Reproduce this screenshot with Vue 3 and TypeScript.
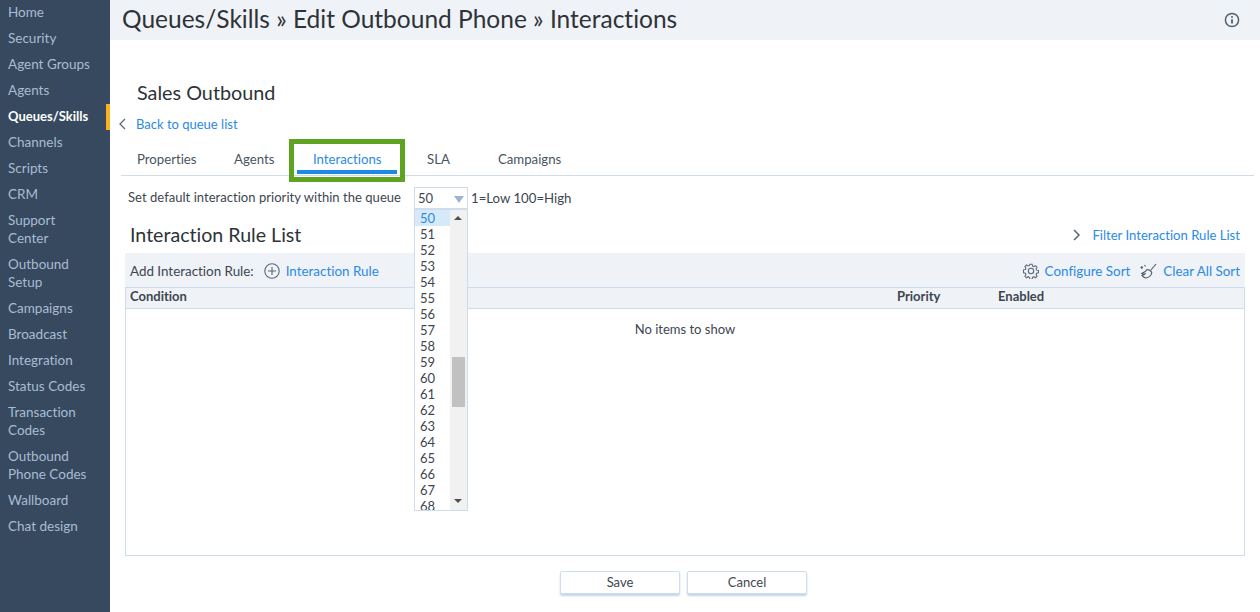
<script setup lang="ts">
interface NavItem { label: string; active?: boolean }
const nav: NavItem[] = [
  { label: 'Home' }, { label: 'Security' }, { label: 'Agent Groups' }, { label: 'Agents' },
  { label: 'Queues/Skills', active: true }, { label: 'Channels' }, { label: 'Scripts' }, { label: 'CRM' },
  { label: 'Support Center' }, { label: 'Outbound Setup' }, { label: 'Campaigns' }, { label: 'Broadcast' },
  { label: 'Integration' }, { label: 'Status Codes' }, { label: 'Transaction Codes' },
  { label: 'Outbound Phone Codes' }, { label: 'Wallboard' }, { label: 'Chat design' }
]
const tabs = ['Properties', 'Agents', 'Interactions', 'SLA', 'Campaigns']
const options: number[] = Array.from({ length: 19 }, (_, i) => 50 + i)
</script>

<template>
  <div class="app">
    <aside class="side">
      <a v-for="n in nav" :key="n.label" class="nav" :class="{ on: n.active }">{{ n.label }}</a>
    </aside>
    <main class="main">
      <header class="top">
        <h1>Queues/Skills » Edit Outbound Phone » Interactions</h1>
        <svg class="info" width="16" height="16" viewBox="0 0 16 16" fill="none" stroke="#4f6070" stroke-width="1.5">
          <circle cx="8" cy="8" r="6.6" />
          <path d="M8 7.2v4.2" stroke-width="1.8" />
          <circle cx="8" cy="4.9" r="1" fill="#4f6070" stroke="none" />
        </svg>
      </header>
      <section class="body">
        <h2 class="name">Sales Outbound</h2>
        <div class="back">
          <svg width="8" height="12" viewBox="0 0 8 12" fill="none" stroke="#5a6875" stroke-width="1.3"><path d="M7 1 2 6l5 5" /></svg>
          <a class="link">Back to queue list</a>
        </div>
        <nav class="tabs">
          <a v-for="t in tabs" :key="t" class="tab" :class="['t-' + t.toLowerCase()]">{{ t }}</a>
          <span class="callout"></span>
        </nav>
        <div class="prio">
          <span class="prio-label">Set default interaction priority within the queue</span>
          <div class="select">
            <span>50</span>
            <i class="caret"></i>
            <div class="drop">
              <ul>
                <li v-for="o in options" :key="o" :class="{ sel: o === 50 }">{{ o }}</li>
              </ul>
              <div class="bar">
                <i class="up"></i>
                <b class="thumb"></b>
                <i class="down"></i>
              </div>
            </div>
          </div>
          <span class="hint">1=Low 100=High</span>
        </div>
        <div class="list-head">
          <h2>Interaction Rule List</h2>
          <div class="filter">
            <svg width="8" height="12" viewBox="0 0 8 12" fill="none" stroke="#5a6875" stroke-width="1.5"><path d="m1 1 5 5-5 5" /></svg>
            <a class="link">Filter Interaction Rule List</a>
          </div>
        </div>
        <div class="grid">
          <div class="tools">
            <span class="add">Add Interaction Rule:</span>
            <svg class="plus" width="16" height="16" viewBox="0 0 16 16" fill="none" stroke="#5a6875" stroke-width="1.1">
              <circle cx="8" cy="8" r="7.2" /><path d="M8 4v8M4 8h8" />
            </svg>
            <a class="link">Interaction Rule</a>
            <span class="grow"></span>
            <svg class="ic" width="16" height="16" viewBox="0 0 16 16" fill="none" stroke="#5a6875" stroke-width="1.1">
              <path d="M6.800.8h2.400l.4 2 1.400.6 1.700-1.100 1.700 1.700-1.100 1.700.6 1.400 2 .4v2.400l-2 .4-.6 1.400 1.100 1.700-1.700 1.700-1.700-1.100-1.400.6-.4 2H6.800l-.4-2-1.400-.6-1.700 1.100-1.700-1.700 1.100-1.700-.6-1.400-2-.4V6.800l2-.4.6-1.400-1.100-1.700 1.700-1.700 1.700 1.100 1.400-.6z" transform="translate(.4 .4) scale(.95)" />
              <circle cx="8" cy="8" r="2.700" />
            </svg>
            <a class="link cfg">Configure Sort</a>
            <svg class="ic" width="17" height="16" viewBox="0 0 17 16" fill="none" stroke="#4f5d6b" stroke-width="1.100">
              <path d="M16 1 10.500 7.500" />
              <path d="M7 6.500c1.800 0 3.800 1.300 4.800 3-.4 2.800-2.600 5-6.300 5.500-1.200-.4-2.600-1.300-3.500-2.600 1.500-.2 2.600-.7 3.100-1.600-.8.200-2 .2-3.100-.4C4.400 9.700 6.200 8.200 7 6.500z" />
              <path d="M.5 4.500h2.500M1.800 3v3M4.500 2l1 1.300" />
            </svg>
            <a class="link">Clear All Sort</a>
          </div>
          <div class="cols">
            <span class="c-cond">Condition</span>
            <span class="c-prio">Priority</span>
            <span class="c-en">Enabled</span>
          </div>
          <div class="rows">No items to show</div>
        </div>
        <div class="actions">
          <button type="button">Save</button>
          <button type="button">Cancel</button>
        </div>
      </section>
    </main>
  </div>
</template>

<style>
html, body { margin: 0; padding: 0; background: #fff; overflow: hidden; }
</style>

<style scoped>
.app { display: flex; width: 1260px; height: 612px; overflow: hidden; font-family: Lato, "Noto Sans", sans-serif; font-size: 13px; color: #3d4650; font-variant-ligatures: none; }
.side { flex: 0 0 110px; background: #36495e; display: flex; flex-direction: column; }
.nav { display: block; padding: 3px 14px 5px 8px; line-height: 18px; color: #a8bcd4; font-size: 13.5px; position: relative; }
.nav.on { color: #fff; font-weight: 700; font-size: 13px; }
.nav.on::after { content: ""; position: absolute; right: 0; top: 0; bottom: 0; width: 4px; background: #fbb01f; }
.main { flex: 1; min-width: 0; display: flex; flex-direction: column; }
.top { height: 40px; background: #eff2f7; display: flex; align-items: center; padding: 0 20px 0 12px; justify-content: space-between; }
.top h1 { margin: 0 0 2px; font-size: 24.5px; font-weight: 400; color: #2e3338; line-height: 38px; }
.body { flex: 1; display: flex; flex-direction: column; padding: 0 6px 0 11px; }
.name { margin: 41px 0 0 16px; font-size: 19.800px; font-weight: 400; line-height: 22px; color: #2e3338; }
.link { color: #2b8ae6; white-space: nowrap; }
.back { display: flex; align-items: center; gap: 10px; margin: 12px 0 0 -3px; height: 18px; }
.tabs { position: relative; height: 34px; margin-top: 9px; border-bottom: 1px solid #cfdcec; box-sizing: border-box; font-size: 13.2px; }
.tab { position: absolute; top: 8px; line-height: 18px; color: #4a5560; }
.t-properties { left: 16px; }
.t-agents { left: 113px; }
.t-interactions { left: 192px; color: #2b8ae6; }
.t-interactions::after { content: ""; position: absolute; left: -16px; top: 20px; width: 100px; height: 4px; background: #1e88e5; }
.t-sla { left: 306px; }
.t-campaigns { left: 377px; }
.callout { position: absolute; left: 168px; top: -3px; width: 116px; height: 43px; box-sizing: border-box; border: 5px solid #5fa322; }
.prio { display: flex; align-items: center; height: 22px; margin-top: 11px; padding-left: 7px; }
.prio-label { width: 286px; white-space: nowrap; margin-top: -2px; letter-spacing: .04px; }
.select { position: relative; box-sizing: border-box; width: 54px; height: 22px; border: 1px solid #cfdcec; padding-left: 3px; line-height: 20px; }
.caret { position: absolute; right: 3px; top: 8px; border-left: 5.500px solid transparent; border-right: 5.500px solid transparent; border-top: 7px solid #9db3d0; }
.hint { margin-left: 3px; font-size: 13.2px; }
.drop { position: absolute; left: -1px; top: 21px; z-index: 5; box-sizing: border-box; width: 54px; height: 302px; background: #fff; border: 1px solid #cfdcec; display: flex; overflow: hidden; }
.drop ul { flex: 1; margin: 0; padding: 0; list-style: none; overflow: hidden; }
.drop li { height: 16px; line-height: 16px; padding-left: 5px; color: #3d4650; }
.drop li.sel { background: #d6e9f8; color: #2b8ae6; }
.bar { flex: 0 0 17px; background: #f1f1f1; position: relative; }
.thumb { position: absolute; left: 2px; top: 147px; width: 13px; height: 50px; background: #c1c1c1; }
.up, .down { position: absolute; left: 4px; border-left: 4px solid transparent; border-right: 4px solid transparent; }
.up { top: 6px; border-bottom: 4px solid #505050; }
.down { bottom: 7px; border-top: 4px solid #505050; }
.list-head { display: flex; justify-content: space-between; align-items: center; height: 22px; margin-top: 14px; padding: 0 14px 0 9px; }
.list-head h2 { margin: 0; font-size: 19.600px; font-weight: 400; color: #2e3338; }
.filter { display: flex; align-items: center; gap: 11px; font-size: 13.1px; margin-top: 2px; }
.grid { margin: 8px 9px 0 4px; display: flex; flex-direction: column; height: 303px; }
.tools { flex: 0 0 34px; background: #eff2f7; display: flex; align-items: center; padding: 1px 5px 0 5px; box-sizing: border-box; font-size: 13.4px; }
.add { margin-right: 10px; }
.plus { margin-right: 6px; }
.grow { flex: 1; }
.ic { margin-right: 6px; }
.cfg { margin-right: 10px; }
.cols { flex: 0 0 22px; box-sizing: border-box; background: #eff2f7; border: 1px solid #cfdcec; position: relative; line-height: 18px; font-weight: 700; }
.cols span { position: absolute; top: -1px; }
.c-cond { left: 4px; }
.c-prio { left: 771px; }
.c-en { left: 872px; }
.rows { flex: 1; border: 1px solid #cfdcec; border-top: 0; text-align: center; padding-top: 11px; line-height: 18px; }
.actions { display: flex; justify-content: center; gap: 7px; margin-top: 15px; padding-right: 8px; }
button { width: 120px; height: 23px; box-sizing: border-box; background: #fff; border: 1px solid #cfdcec; border-radius: 2px; box-shadow: 0 2px 2px #c4d3e6; font: inherit; color: #3d4650; padding: 0 0 2px; }
</style>
